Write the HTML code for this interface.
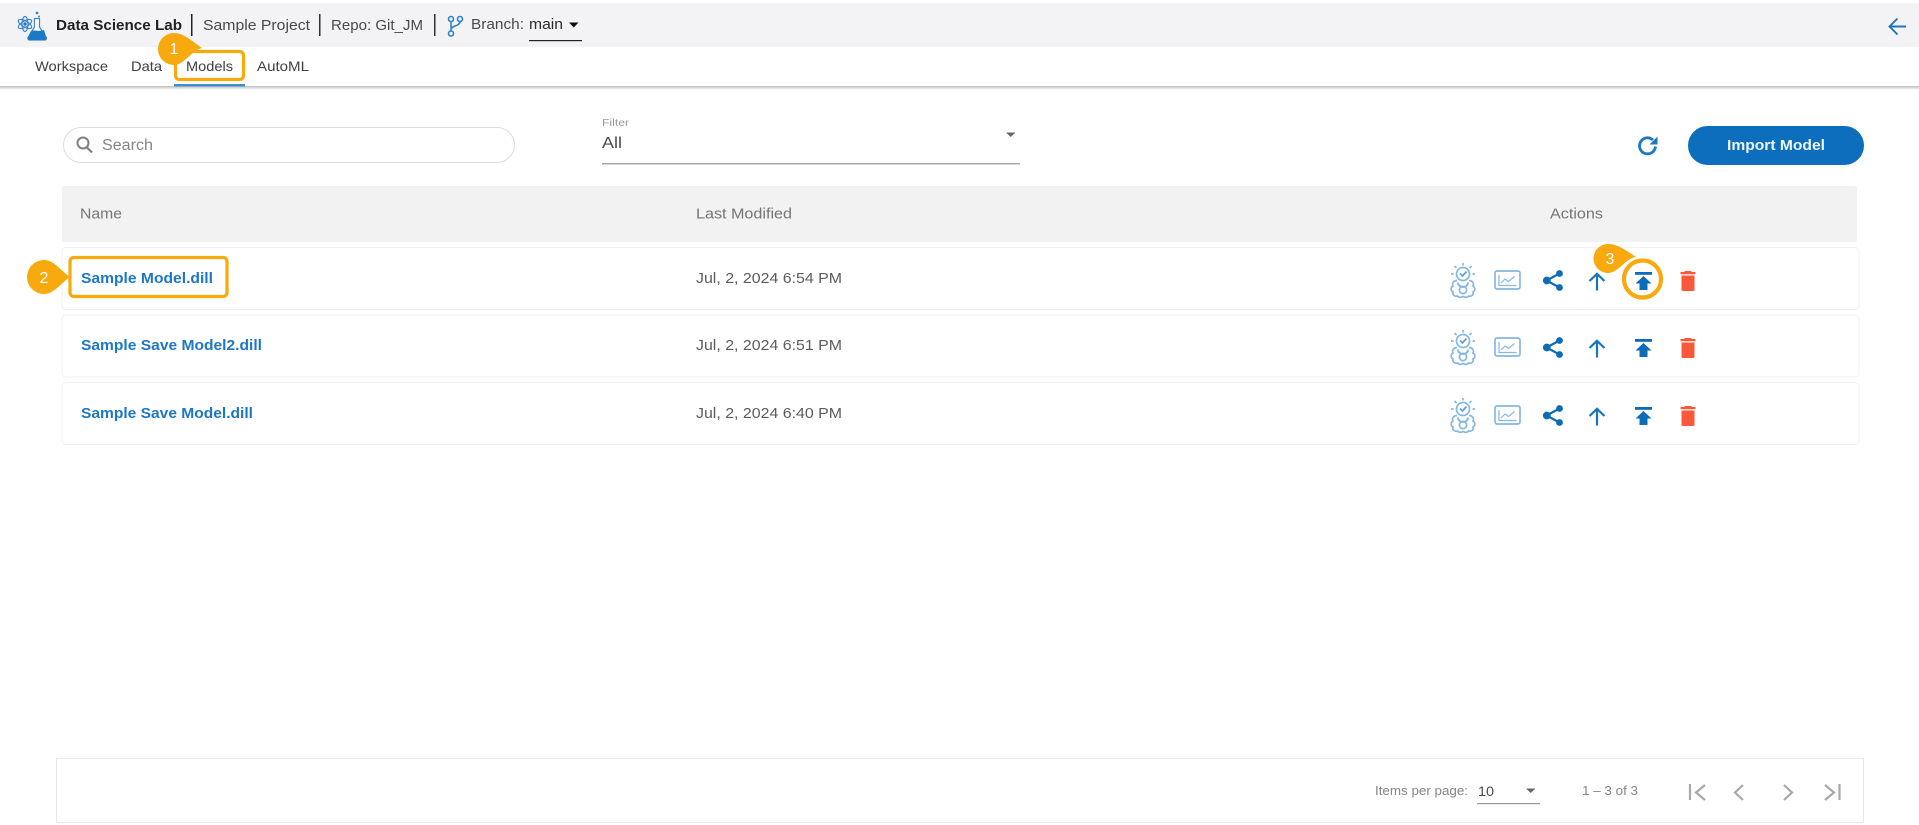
<!DOCTYPE html>
<html lang="en">
<head>
<meta charset="utf-8">
<title>Data Science Lab - Models</title>
<style>
html,body{margin:0;padding:0;width:1919px;height:825px;overflow:hidden;background:#fff}
svg{display:block}
text{font-family:"Liberation Sans",sans-serif}
</style>
</head>
<body>
<svg width="1919" height="825" viewBox="0 0 1919 825" xmlns="http://www.w3.org/2000/svg">
<defs>
<linearGradient id="sh" x1="0" y1="0" x2="0" y2="1"><stop offset="0" stop-color="#bdbdbd"/><stop offset="1" stop-color="#fff"/></linearGradient>
<filter id="bl" x="-2%" y="-2%" width="104%" height="104%"><feGaussianBlur stdDeviation="0.35"/></filter>
<g id="bulb" fill="none" stroke="#86b8e2" stroke-width="1.700">
<circle cx="12" cy="11" r="6.500"/>
<path d="M12 0v2.500M3.500 3l2 2M20.500 3l-2 2M0 11h2.500M24 11h-2.500"/>
<path d="M9 10.500l2.500 2.500 4-4.500" stroke="#5f9fd6"/>
<path d="M6 17.500c-3 0-5.500 2.500-4 5.500-2.500 1.500-2.500 4.500 0 6-1 2.500 1.500 5 4.500 4 1.500 2 3.500 1.500 5.500.5 2 1 4 1.500 5.500-.5 3 1 5.500-1.500 4.500-4 2.500-1.500 2.500-4.500 0-6 1.500-3-1-5.500-4-5.500"/>
<path d="M7 19.500c0 6 10 6 10 0" stroke-width="2"/>
<circle cx="12" cy="27" r="3.600"/>
</g>
<g id="chart" fill="none" stroke="#86b8e2" stroke-width="1.700">
<rect x="1" y="1" width="25" height="18" rx="2"/>
<path d="M5 5v10.500h17.500" stroke-width="1.200"/>
<path d="M7 13l4-4 3.500 2.500 6-5" stroke-width="1.200"/>
</g>
<g id="share">
<path d="M16.500 3.500L3.500 10.500 16.500 17.500" fill="none" stroke="#0b6cb8" stroke-width="2.200"/>
<circle cx="16.500" cy="3.500" r="3.400" fill="#0b6cb8"/>
<circle cx="3.800" cy="10.500" r="3.900" fill="#0b6cb8"/>
<circle cx="16.500" cy="17.500" r="3.400" fill="#0b6cb8"/>
</g>
<g id="up" fill="none" stroke="#1976bd" stroke-width="2.200">
<path d="M9 18.500V2M1.500 9L9 1.800 16.500 9"/>
</g>
<g id="topup" fill="#0b6cb8">
<rect x="0" y="0" width="17" height="2.800"/>
<path d="M8.500 4L16.500 11.500H12.500V18H4.500V11.500H0.500z"/>
</g>
<g id="trash" fill="#f9583a">
<path d="M5 1h6l1 1h3.500V4.200H.5V2H4z"/>
<path d="M1.500 5.500h13V19.500a1.500 1.500 0 0 1-1.500 1.500H3a1.500 1.500 0 0 1-1.500-1.500z"/>
</g>
</defs>

<g filter="url(#bl)">
<rect width="1919" height="825" fill="#fff"/>
<!-- top bar -->
<rect x="0" y="3" width="1919" height="44" fill="#f3f3f5"/>
<rect x="0" y="86" width="1919" height="4" fill="url(#sh)"/>

<!-- logo -->
<g fill="none" stroke="#3f86c8" stroke-width="1.200">
<ellipse cx="25" cy="24" rx="7.500" ry="3" transform="rotate(30 25 24)"/>
<ellipse cx="25" cy="24" rx="7.500" ry="3" transform="rotate(-30 25 24)"/>
<ellipse cx="25" cy="24" rx="3" ry="7.500"/>
</g>
<circle cx="25" cy="24" r="1.700" fill="#2f78bd"/>
<path d="M34.500 18.500h5v8.500l6.800 10.500a1.800 1.800 0 0 1-1.500 2.500H29.500a1.800 1.800 0 0 1-1.500-2.500L34.500 27z" fill="#fff" stroke="#3f86c8" stroke-width="1.200"/>
<path d="M31 31c4-1.500 7 1 13-1l2.300 7.500a1.800 1.800 0 0 1-1.500 2.500H29.500a1.800 1.800 0 0 1-1.500-2.500z" fill="#1b78c8"/>
<circle cx="37" cy="13" r="1.400" fill="#3f86c8"/><circle cx="39" cy="16.500" r="1" fill="#3f86c8"/>

<text x="56" y="30" font-size="14.500" font-weight="700" fill="#222" textLength="126" lengthAdjust="spacingAndGlyphs">Data Science Lab</text>
<rect x="191" y="14" width="1.500" height="22" fill="#222"/>
<text x="203" y="30" font-size="14.500" fill="#4a4a4a" textLength="107" lengthAdjust="spacingAndGlyphs">Sample Project</text>
<rect x="319" y="14" width="1.500" height="22" fill="#333"/>
<text x="331" y="30" font-size="14.500" fill="#4a4a4a" textLength="92" lengthAdjust="spacingAndGlyphs">Repo: Git_JM</text>
<rect x="434" y="14" width="1.500" height="22" fill="#333"/>
<g fill="none" stroke="#2f83c9" stroke-width="1.600">
<circle cx="451" cy="19" r="2.500"/><circle cx="460" cy="19" r="2.500"/><circle cx="451" cy="33.500" r="2.500"/>
<path d="M451 21.500V31M460 21.500c0 5-9 4-9 8"/>
</g>
<text x="471" y="29" font-size="14.500" fill="#4a4a4a" textLength="53" lengthAdjust="spacingAndGlyphs">Branch:</text>
<text x="529" y="29" font-size="14.500" fill="#2a2a2a" textLength="34" lengthAdjust="spacingAndGlyphs">main</text>
<path d="M569 22.500h9.500l-4.750 5z" fill="#111"/>
<rect x="529" y="40" width="53" height="1.200" fill="#222"/>

<!-- back arrow -->
<path d="M1906 26.500H1890M1897.500 18.500L1889.500 26.500l8 8" fill="none" stroke="#1f74bd" stroke-width="1.900"/>

<!-- tabs -->
<text x="35" y="71" font-size="14" fill="#404040" textLength="73" lengthAdjust="spacingAndGlyphs">Workspace</text>
<text x="131" y="71" font-size="14" fill="#404040" textLength="31" lengthAdjust="spacingAndGlyphs">Data</text>
<text x="186" y="71" font-size="14" fill="#404040" textLength="47" lengthAdjust="spacingAndGlyphs">Models</text>
<text x="257" y="71" font-size="14" fill="#404040" textLength="52" lengthAdjust="spacingAndGlyphs">AutoML</text>
<rect x="174" y="84" width="71" height="2.500" fill="#3f8fd2"/>
<rect x="175.500" y="51.500" width="68" height="28" rx="4" fill="none" stroke="#f7a90a" stroke-width="3.200"/>
<path d="M174 33c10 0 19 9 28 15-10 2-18 17-28 17a16 16 0 0 1 0-32z" fill="#f7a90a"/>
<text x="174" y="54" font-size="16" fill="#fff" text-anchor="middle">1</text>

<!-- search -->
<rect x="63.500" y="127.500" width="451" height="35" rx="17.500" fill="#fff" stroke="#dcdcdf"/>
<circle cx="83" cy="143" r="5.500" fill="none" stroke="#808080" stroke-width="2"/>
<path d="M87 147.500l5 5" stroke="#808080" stroke-width="2.200"/>
<text x="102" y="150" font-size="15.500" fill="#858585" textLength="51" lengthAdjust="spacingAndGlyphs">Search</text>

<!-- filter -->
<text x="602" y="126" font-size="10.500" fill="#999" textLength="27" lengthAdjust="spacingAndGlyphs">Filter</text>
<text x="602" y="148" font-size="15.500" fill="#4a4a4a" textLength="20" lengthAdjust="spacingAndGlyphs">All</text>
<path d="M1006 132.500h9.500l-4.750 4.500z" fill="#666"/>
<rect x="602" y="163" width="418" height="1.500" fill="#aaa"/>

<!-- refresh -->
<path d="M1655.500 146.500a8 8 0 1 1-2.500-6.500" fill="none" stroke="#1f78c1" stroke-width="2.800"/>
<path d="M1657.500 136.500v8h-8z" fill="#1f78c1"/>

<!-- button -->
<rect x="1688" y="126" width="176" height="39" rx="19.500" fill="#0a6ebd"/>
<text x="1776" y="150" font-size="14.500" font-weight="700" fill="#eef6fc" text-anchor="middle" textLength="98" lengthAdjust="spacingAndGlyphs">Import Model</text>

<!-- table head -->
<rect x="62" y="186" width="1795" height="56" rx="2" fill="#f2f2f3"/>
<text x="80" y="218.500" font-size="14.500" fill="#757575" textLength="42" lengthAdjust="spacingAndGlyphs">Name</text>
<text x="696" y="218.500" font-size="14.500" fill="#757575" textLength="96" lengthAdjust="spacingAndGlyphs">Last Modified</text>
<text x="1550" y="218.500" font-size="14.500" fill="#757575" textLength="53" lengthAdjust="spacingAndGlyphs">Actions</text>

<!-- rows -->
<rect x="62" y="247.500" width="1797" height="62" rx="4" fill="#fff" stroke="#f0f0f2"/>
<rect x="62" y="315" width="1797" height="62" rx="4" fill="#fff" stroke="#f0f0f2"/>
<rect x="62" y="382.500" width="1797" height="62" rx="4" fill="#fff" stroke="#f0f0f2"/>

<text x="81" y="283" font-size="14.500" font-weight="700" fill="#1f78c4" textLength="132" lengthAdjust="spacingAndGlyphs">Sample Model.dill</text>
<text x="81" y="350" font-size="14.500" font-weight="700" fill="#1f78c4" textLength="181" lengthAdjust="spacingAndGlyphs">Sample Save Model2.dill</text>
<text x="81" y="418" font-size="14.500" font-weight="700" fill="#1f78c4" textLength="172" lengthAdjust="spacingAndGlyphs">Sample Save Model.dill</text>

<text x="696" y="283" font-size="14.500" fill="#5c5c5c" textLength="146" lengthAdjust="spacingAndGlyphs">Jul, 2, 2024 6:54 PM</text>
<text x="696" y="350" font-size="14.500" fill="#5c5c5c" textLength="146" lengthAdjust="spacingAndGlyphs">Jul, 2, 2024 6:51 PM</text>
<text x="696" y="418" font-size="14.500" fill="#5c5c5c" textLength="146" lengthAdjust="spacingAndGlyphs">Jul, 2, 2024 6:40 PM</text>

<!-- row 1 icons -->
<use href="#bulb" x="1451" y="263"/>
<use href="#chart" x="1494" y="270"/>
<use href="#share" x="1543" y="270"/>
<use href="#up" x="1588" y="272"/>
<use href="#topup" x="1635" y="272"/>
<use href="#trash" x="1680" y="270"/>
<!-- row 2 icons -->
<use href="#bulb" x="1451" y="330"/>
<use href="#chart" x="1494" y="337"/>
<use href="#share" x="1543" y="337"/>
<use href="#up" x="1588" y="339"/>
<use href="#topup" x="1635" y="339"/>
<use href="#trash" x="1680" y="337"/>
<!-- row 3 icons -->
<use href="#bulb" x="1451" y="398"/>
<use href="#chart" x="1494" y="405"/>
<use href="#share" x="1543" y="405"/>
<use href="#up" x="1588" y="407"/>
<use href="#topup" x="1635" y="407"/>
<use href="#trash" x="1680" y="405"/>

<!-- callout 2 -->
<rect x="70" y="257.500" width="157" height="39" rx="4" fill="none" stroke="#f7a90a" stroke-width="3.200"/>
<path d="M44 260c10 0 17 11 26 17-9 6-16 17-26 17a17 17 0 0 1 0-34z" fill="#f7a90a"/>
<text x="44" y="283" font-size="16" fill="#fff" text-anchor="middle">2</text>

<!-- callout 3 -->
<circle cx="1642.500" cy="279" r="18.500" fill="none" stroke="#f7a90a" stroke-width="4.200"/>
<path d="M1608 244c10 0 19 7 28 13-10 1-18 16-28 16a14.500 14.500 0 0 1 0-29z" fill="#f7a90a"/>
<text x="1610" y="264" font-size="16" fill="#fff" text-anchor="middle">3</text>

<!-- paginator -->
<rect x="56.500" y="758.500" width="1807" height="64" fill="#fff" stroke="#e8e8ea"/>
<text x="1375" y="795" font-size="12.500" fill="#858585" textLength="93" lengthAdjust="spacingAndGlyphs">Items per page:</text>
<text x="1478" y="796" font-size="14" fill="#4a4a4a" textLength="16" lengthAdjust="spacingAndGlyphs">10</text>
<path d="M1526 788.500h9.500l-4.750 4.500z" fill="#666"/>
<rect x="1477" y="803" width="63" height="1.200" fill="#999"/>
<text x="1582" y="795" font-size="12.500" fill="#858585" textLength="56" lengthAdjust="spacingAndGlyphs">1 – 3 of 3</text>
<g fill="none" stroke="#a9a9a9" stroke-width="2.200">
<path d="M1690 784v16M1705 785l-9 7.500 9 7.500"/>
<path d="M1743 785l-8 7.500 8 7.500"/>
<path d="M1784 785l8 7.500-8 7.500"/>
<path d="M1825 785l9 7.500-9 7.500M1839.500 784v16"/>
</g>
</g>
</svg>
</body>
</html>
